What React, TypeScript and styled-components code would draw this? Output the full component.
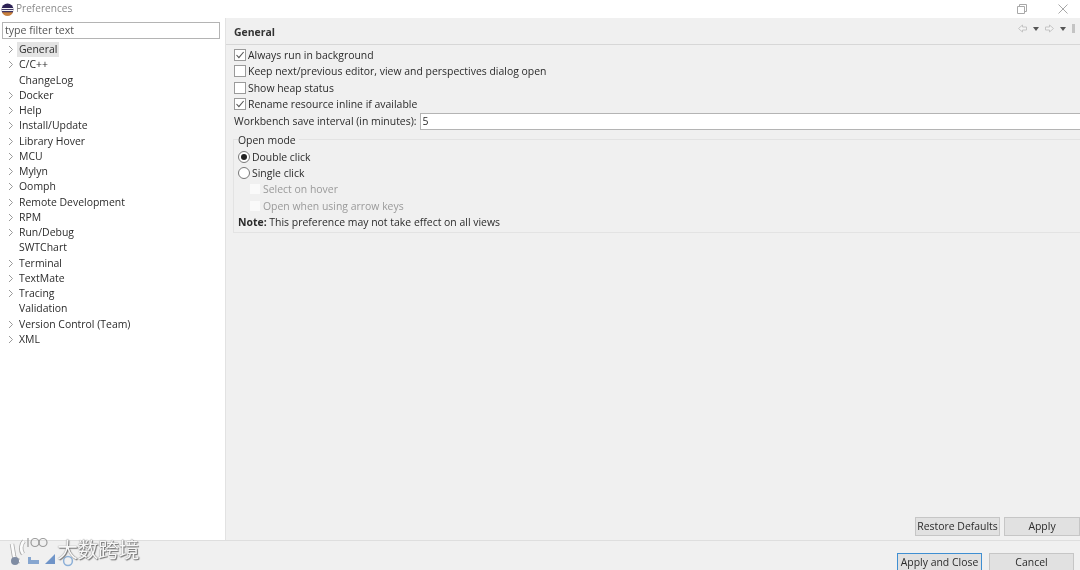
import { ReactNode } from 'react';
import styled, { createGlobalStyle } from 'styled-components';

const Global = createGlobalStyle`
    html, body {
        margin: 0;
        padding: 0;
        background: #fff;
    }
    * {
        box-sizing: border-box;
    }
`;

const Window = styled.div`
    position: relative;
    width: 1080px;
    height: 570px;
    overflow: hidden;
    display: flex;
    flex-direction: column;
    background: #fff;
    color: #2b2b2b;
    font-family: "Open Sans", "Noto Sans", sans-serif;
    font-size: 10.45px;
    filter: blur(0.35px);
`;

const TitleBar = styled.div`
    height: 18px;
    flex: none;
    display: flex;
    align-items: center;
    padding-left: 1px;
    gap: 2px;
`;

const TitleText = styled.div`
    color: #8c8c8c;
    font-size: 10.1px;
    line-height: 16px;
    margin-bottom: 2px;
    flex: 1;
`;

const WinControls = styled.div`
    display: flex;
    align-items: center;
    gap: 31px;
    padding-right: 12px;
`;

const Body = styled.div`
    flex: 1;
    display: flex;
    min-height: 0;
`;

const Sidebar = styled.div`
    width: 226px;
    flex: none;
    padding: 4px 6px 0 2px;
    border-right: 1px solid #e2e2e2;
`;

const FilterInput = styled.div`
    width: 218px;
    height: 17px;
    border: 1px solid #b4b4b4;
    padding-left: 2px;
    line-height: 14px;
    font-size: 10.6px;
    color: #555;
    background: #fff;
`;

const Tree = styled.div`
    display: grid;
    grid-auto-rows: 15.26px;
    margin-top: 3px;
`;

const TreeRow = styled.div`
    display: flex;
    align-items: center;
    padding-left: 6px;
`;

const Arrow = styled.div`
    width: 9px;
    flex: none;
    display: flex;
    align-items: center;
`;

const TreeLabel = styled.span<{ $selected?: boolean }>`
    padding: 0 2px;
    line-height: 15px;
    background: ${p => (p.$selected ? '#e4e4e4' : 'transparent')};
`;

const Main = styled.div`
    flex: 1;
    background: #f0f0f0;
    display: flex;
    flex-direction: column;
    min-width: 0;
`;

const Header = styled.div`
    height: 27px;
    flex: none;
    padding: 2px 0 0 8px;
    display: flex;
    align-items: center;
    justify-content: space-between;
    border-bottom: 1px solid #d7d7d7;
    font-weight: 700;
    color: #333;
`;

const HeaderIcons = styled.div`
    display: flex;
    align-items: center;
    align-self: flex-start;
    margin-top: 4px;
    gap: 6px;
    padding-right: 5px;
`;

const Content = styled.div`
    flex: 1;
    padding: 2px 0 0 8px;
    display: flex;
    flex-direction: column;
`;

const CheckRow = styled.div<{ $muted?: boolean; $indent?: boolean }>`
    height: 16.3px;
    display: flex;
    align-items: center;
    gap: 2px;
    padding-left: ${p => (p.$indent ? '11px' : '0')};
    color: ${p => (p.$muted ? '#9a9a9a' : 'inherit')};
`;

const Box = styled.div<{ $muted?: boolean }>`
    width: 12px;
    height: 12px;
    flex: none;
    display: flex;
    align-items: center;
    justify-content: center;
    border: 1px solid ${p => (p.$muted ? '#f0f0f0' : '#9a9a9a')};
    background: ${p => (p.$muted ? '#fafafa' : '#fff')};
`;

const SaveRow = styled.div`
    display: flex;
    align-items: center;
    gap: 3px;
    height: 17px;
    margin-top: 0.5px;
`;

const SaveInput = styled.div`
    flex: 1;
    height: 17px;
    border: 1px solid #b4b4b4;
    border-right: none;
    background: #fff;
    padding-left: 2px;
    line-height: 15px;
`;

const Group = styled.div`
    position: relative;
    margin-top: 9.5px;
    margin-left: -1px;
    border: 1px solid #e3e3e3;
    border-right: none;
    padding: 8.5px 0 2px 4px;
    height: 94px;
`;

const GroupTitle = styled.div`
    position: absolute;
    top: -7px;
    left: 4px;
    padding-right: 3px;
    background: #f0f0f0;
    line-height: 15px;
`;

const Radio = styled.div<{ $on?: boolean }>`
    width: 12px;
    height: 12px;
    flex: none;
    border-radius: 50%;
    border: 1px solid #777;
    background: #fff;
    display: flex;
    align-items: center;
    justify-content: center;

    &::after {
        content: '';
        display: ${p => (p.$on ? 'block' : 'none')};
        width: 6px;
        height: 6px;
        border-radius: 50%;
        background: #222;
    }
`;

const Note = styled.div`
    height: 16.3px;
    line-height: 16px;
`;

const PageActions = styled.div`
    display: flex;
    justify-content: flex-end;
    gap: 4px;
    padding-bottom: 4px;
`;

const Button = styled.div<{ $wide?: number; $primary?: boolean }>`
    width: ${p => p.$wide}px;
    height: 19px;
    padding-bottom: 1px;
    display: flex;
    align-items: center;
    justify-content: center;
    white-space: nowrap;
    background: #e1e1e1;
    border: 1px solid ${p => (p.$primary ? '#3f8fd2' : '#c6c6c6')};
`;

const Footer = styled.div`
    height: 30px;
    flex: none;
    background: #f0f0f0;
    border-top: 1px solid #dedede;
    display: flex;
    justify-content: flex-end;
    gap: 7px;
    padding: 12px 6px 0 0;
`;

const Watermark = styled.div`
    position: absolute;
    left: 9px;
    bottom: 1px;
    display: flex;
    align-items: center;
    height: 34px;
`;

const WatermarkText = styled.div`
    margin-left: -18px;
    margin-top: -8px;
    color: #f7f7f7;
    font-family: "Noto Sans CJK SC", sans-serif;
    font-size: 21px;
    letter-spacing: -0.5px;
    text-shadow: 0 0 1px #555, 1px 1px 1px #777;
`;

function EclipseIcon() {
    return (
        <svg width="13" height="13" viewBox="0 0 13 13">
            <circle cx="6.5" cy="6.5" r="6" fill="#2c2255" />
            <rect x="0.5" y="5" width="12" height="1.1" fill="#f4f4f4" />
            <rect x="0.5" y="7" width="12" height="1.1" fill="#f4f4f4" />
            <path d="M1 9.2a6 6 0 0 0 11 0z" fill="#c9803c" />
        </svg>
    );
}

function TreeArrow() {
    return (
        <svg width="6" height="9" viewBox="0 0 6 9">
            <path d="M1 1l3.5 3.5L1 8" fill="none" stroke="#9a9a9a" strokeWidth="1" />
        </svg>
    );
}

function Tick() {
    return (
        <svg width="10" height="10" viewBox="0 0 10 10">
            <path d="M1.5 5l2.4 2.6L8.6 2" fill="none" stroke="#555" strokeWidth="1.1" />
        </svg>
    );
}

function NavArrow({ flip }: { flip?: boolean }) {
    return (
        <svg width="9" height="9" viewBox="0 0 9 9">
            <path
                d={flip ? 'M.5 3h4V1l4 3.5-4 3.5V6h-4z' : 'M8.5 3h-4V1l-4 3.5 4 3.5V6h4z'}
                fill="#f4f4f4"
                stroke="#c4c4c4"
            />
        </svg>
    );
}

function DropCaret() {
    return (
        <svg width="6" height="4" viewBox="0 0 6 4">
            <path d="M0 0h6L3 4z" fill="#555" />
        </svg>
    );
}

function Logo() {
    return (
        <svg width="66" height="34" viewBox="0 0 66 34">
            <g fill="none" stroke="#8f8f8f" strokeWidth="4.4" opacity="0.7">
                <path d="M3 9l2 12c1 4 3 5 6 5" />
                <path d="M15 6c-3 3-4 9-1 13" />
            </g>
            <g fill="none" stroke="#fbfbfb" strokeWidth="2.8">
                <path d="M3 9l2 12c1 4 3 5 6 5" />
                <path d="M15 6c-3 3-4 9-1 13" />
            </g>
            <g fill="none" stroke="#9a9a9a" strokeWidth="1.2">
                <path d="M19 3v9" />
                <circle cx="26" cy="7.5" r="4" />
                <circle cx="34" cy="7.5" r="4" />
            </g>
            <circle cx="6" cy="26" r="4" fill="#7f8ca3" />
            <path d="M19 22h3v3h8v4H19z" fill="#86a6d0" />
            <path d="M46 19v10H36z" fill="#6f94c8" />
            <circle cx="59" cy="26" r="4.4" fill="none" stroke="#8cb0d8" strokeWidth="1.5" />
        </svg>
    );
}

const treeItems: { label: string; arrow?: boolean; selected?: boolean }[] = [
    { label: 'General', arrow: true, selected: true },
    { label: 'C/C++', arrow: true },
    { label: 'ChangeLog' },
    { label: 'Docker', arrow: true },
    { label: 'Help', arrow: true },
    { label: 'Install/Update', arrow: true },
    { label: 'Library Hover', arrow: true },
    { label: 'MCU', arrow: true },
    { label: 'Mylyn', arrow: true },
    { label: 'Oomph', arrow: true },
    { label: 'Remote Development', arrow: true },
    { label: 'RPM', arrow: true },
    { label: 'Run/Debug', arrow: true },
    { label: 'SWTChart' },
    { label: 'Terminal', arrow: true },
    { label: 'TextMate', arrow: true },
    { label: 'Tracing', arrow: true },
    { label: 'Validation' },
    { label: 'Version Control (Team)', arrow: true },
    { label: 'XML', arrow: true },
];

function Check({ on, children }: { on?: boolean; children: ReactNode }) {
    return (
        <CheckRow>
            <Box>{on && <Tick />}</Box>
            {children}
        </CheckRow>
    );
}

export default function App() {
    return (
        <Window>
            <Global />
            <TitleBar>
                <EclipseIcon />
                <TitleText>Preferences</TitleText>
                <WinControls>
                    <svg width="10" height="10" viewBox="0 0 10 10">
                        <path d="M.5 2.5h7v7h-7zM2.5 2.5v-2h7v7h-2" fill="none" stroke="#a8a8a8" />
                    </svg>
                    <svg width="10" height="10" viewBox="0 0 10 10">
                        <path d="M.5.5l9 9M9.5.5l-9 9" stroke="#a8a8a8" />
                    </svg>
                </WinControls>
            </TitleBar>
            <Body>
                <Sidebar>
                    <FilterInput>type filter text</FilterInput>
                    <Tree>
                        {treeItems.map(item => (
                            <TreeRow key={item.label}>
                                <Arrow>{item.arrow && <TreeArrow />}</Arrow>
                                <TreeLabel $selected={item.selected}>{item.label}</TreeLabel>
                            </TreeRow>
                        ))}
                    </Tree>
                </Sidebar>
                <Main>
                    <Header>
                        General
                        <HeaderIcons>
                            <NavArrow />
                            <DropCaret />
                            <NavArrow flip />
                            <DropCaret />
                            <svg width="3" height="9" viewBox="0 0 3 9">
                                <path d="M0 0h3v9H0z" fill="#c4c4c4" />
                            </svg>
                        </HeaderIcons>
                    </Header>
                    <Content>
                        <Check on>Always run in background</Check>
                        <Check>Keep next/previous editor, view and perspectives dialog open</Check>
                        <Check>Show heap status</Check>
                        <Check on>Rename resource inline if available</Check>
                        <SaveRow>
                            Workbench save interval (in minutes):
                            <SaveInput>5</SaveInput>
                        </SaveRow>
                        <Group>
                            <GroupTitle>Open mode</GroupTitle>
                            <CheckRow>
                                <Radio $on />
                                Double click
                            </CheckRow>
                            <CheckRow>
                                <Radio />
                                Single click
                            </CheckRow>
                            <CheckRow $muted $indent>
                                <Box $muted />
                                Select on hover
                            </CheckRow>
                            <CheckRow $muted $indent>
                                <Box $muted />
                                Open when using arrow keys
                            </CheckRow>
                            <Note>
                                <b>Note:</b> This preference may not take effect on all views
                            </Note>
                        </Group>
                    </Content>
                    <PageActions>
                        <Button $wide={85}>Restore Defaults</Button>
                        <Button $wide={76}>Apply</Button>
                    </PageActions>
                </Main>
            </Body>
            <Footer>
                <Button $wide={85} $primary>Apply and Close</Button>
                <Button $wide={85}>Cancel</Button>
            </Footer>
            <Watermark>
                <Logo />
                <WatermarkText>大数跨境</WatermarkText>
            </Watermark>
        </Window>
    );
}
